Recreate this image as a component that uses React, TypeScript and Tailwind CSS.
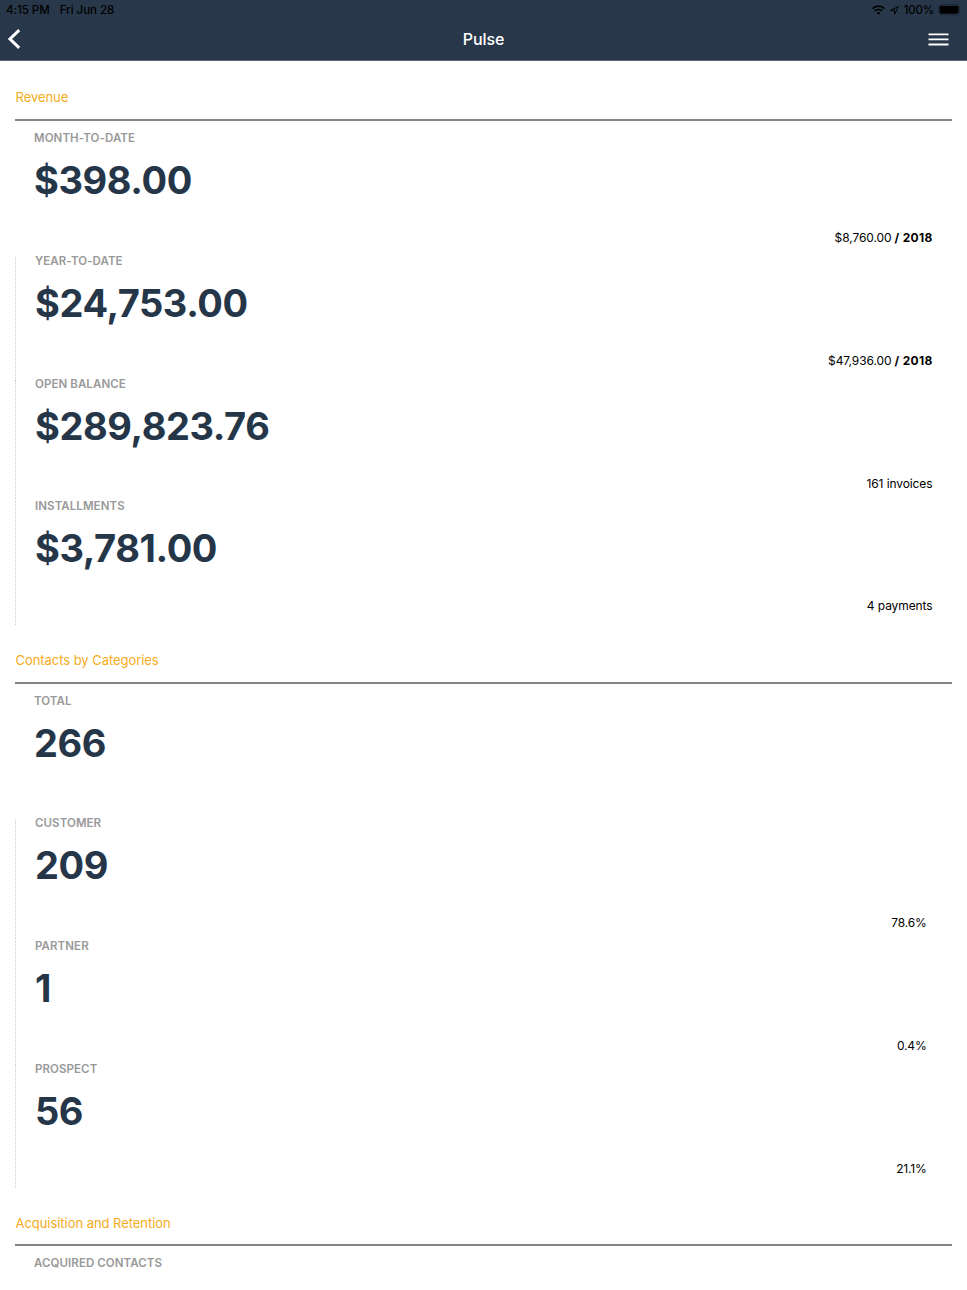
import React from 'react';

type Stat = {
  label: string;
  value: string;
  note?: string;
  year?: string;
  percent?: boolean;
};

const sections: { title: string; stats: Stat[] }[] = [
  {
    title: 'Revenue',
    stats: [
      { label: 'MONTH-TO-DATE', value: '$398.00', note: '$8,760.00', year: '2018' },
      { label: 'YEAR-TO-DATE', value: '$24,753.00', note: '$47,936.00', year: '2018' },
      { label: 'OPEN BALANCE', value: '$289,823.76', note: '161 invoices' },
      { label: 'INSTALLMENTS', value: '$3,781.00', note: '4 payments' },
    ],
  },
  {
    title: 'Contacts by Categories',
    stats: [
      { label: 'TOTAL', value: '266' },
      { label: 'CUSTOMER', value: '209', note: '78.6%', percent: true },
      { label: 'PARTNER', value: '1', note: '0.4%', percent: true },
      { label: 'PROSPECT', value: '56', note: '21.1%', percent: true },
    ],
  },
  {
    title: 'Acquisition and Retention',
    stats: [{ label: 'ACQUIRED CONTACTS', value: '' }],
  },
];

const StatusBar = () => (
  <div className="flex h-[19px] items-center justify-between pl-[6px] pr-[5px] pt-px text-[11.5px] font-medium text-black">
    <div className="flex gap-[10px] pt-px tracking-[-0.03px]">
      <span>4:15 PM</span>
      <span>Fri Jun 28</span>
    </div>
    <div className="flex items-center">
      {/* Wi-Fi */}
      <svg className="mr-[5px]" width="13" height="10" viewBox="0 0 13 10" fill="none" stroke="currentColor" strokeWidth="1.7">
        <path d="M0.6 3.6a8.4 8.4 0 0 1 11.8 0" />
        <path d="M2.8 6a5.3 5.3 0 0 1 7.4 0" />
        <path d="M6.5 9.8 4.6 7.9a2.7 2.7 0 0 1 3.8 0z" fill="currentColor" stroke="none" />
      </svg>
      {/* Location */}
      <svg className="mr-[5px]" width="9" height="9" viewBox="0 0 9 9" fill="none" stroke="currentColor" strokeWidth="1">
        <path d="M8.4 0.6 0.6 4.3h4v4z" strokeLinejoin="round" />
      </svg>
      <span className="pt-px tracking-[-0.2px]">100%</span>
      {/* Battery */}
      <svg className="ml-[4px]" width="24" height="12" viewBox="0 0 24 12">
        <rect x="0.5" y="0.5" width="21" height="10.5" rx="2.8" fill="none" stroke="#1d2936" />
        <rect x="1.5" y="1.7" width="19" height="8" rx="1.6" fill="#000" />
        <path d="M22.6 4q1.2 1.7 0 3.4z" fill="#1d2936" />
      </svg>
    </div>
  </div>
);

const Header = () => (
  <header className="h-[61px] border-b border-[#5d6875] bg-[#28384a]">
    <StatusBar />
    <div className="grid h-[39px] grid-cols-3 items-center pl-[7px] pr-[18px] text-white">
      <svg width="14" height="20" viewBox="0 0 14 20" fill="none" stroke="currentColor" strokeWidth="3">
        <path d="M12.2 1.2 3 10l9.2 8.8" />
      </svg>
      <h1 className="pl-[11px] text-center text-[16px] font-medium leading-5 tracking-[-0.1px]">Pulse</h1>
      <svg className="mt-[2px] justify-self-end" width="21" height="13" viewBox="0 0 21 13" fill="none" stroke="currentColor" strokeWidth="1.8">
        <path d="M0.5 1.3h20M0.5 6.4h20M0.5 11.5h20" />
      </svg>
    </div>
  </header>
);

const StatCard = ({ stat, first }: { stat: Stat; first: boolean }) => (
  <div
    className={
      first
        ? 'flex h-[122.8px] flex-col pl-[19px]'
        : 'flex h-[122.8px] flex-col border-l border-dotted border-[#cfcfcf] pl-[19px]'
    }
  >
    <div className="h-2 text-[11.5px] font-semibold leading-2 tracking-[0.08px] text-[#999]">{stat.label}</div>
    <div className="mt-[14px] h-12 text-[38px] font-[650] leading-12 tracking-[-0.42px] text-[#263649]">{stat.value}</div>
    {stat.note && (
      <div
        className={
          stat.percent
            ? 'mt-[26px] pr-[25px] text-right text-[12px] leading-4 tracking-[-0.2px]'
            : 'mt-[26px] pr-[19px] text-right text-[12px] leading-4 tracking-[-0.1px]'
        }
      >
        {stat.note}
        {stat.year && <b className="tracking-[0.3px]"> / {stat.year}</b>}
      </div>
    )}
  </div>
);

const App = () => (
  <div className="h-[1290px] overflow-hidden bg-white font-['Inter',sans-serif] text-black">
    <Header />
    <main className="pl-[15px] pr-[15.5px] pt-[26.35px]">
      {sections.map((section) => (
        <section key={section.title} className="h-[562.6px]">
          <h2 className="h-[31.65px] pl-[0.5px] text-[13px] leading-5 tracking-[-0.05px] text-[#f5ac21]">{section.title}</h2>
          <div className="mb-[13px] h-[2px] bg-[#858585]" />
          {section.stats.map((stat, i) => (
            <StatCard key={stat.label} stat={stat} first={i === 0} />
          ))}
        </section>
      ))}
    </main>
  </div>
);

export default App;
